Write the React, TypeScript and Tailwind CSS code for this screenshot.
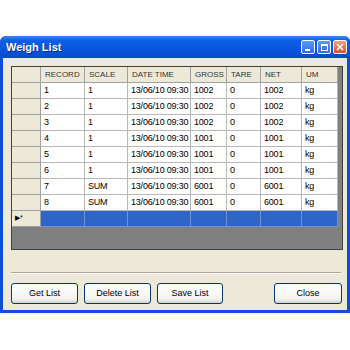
import React from "react";

type Row = { record: string; scale: string; date: string; gross: string; tare: string; net: string; um: string };

const rows: Row[] = [
  { record: "1", scale: "1", date: "13/06/10 09:30", gross: "1002", tare: "0", net: "1002", um: "kg" },
  { record: "2", scale: "1", date: "13/06/10 09:30", gross: "1002", tare: "0", net: "1002", um: "kg" },
  { record: "3", scale: "1", date: "13/06/10 09:30", gross: "1002", tare: "0", net: "1002", um: "kg" },
  { record: "4", scale: "1", date: "13/06/10 09:30", gross: "1001", tare: "0", net: "1001", um: "kg" },
  { record: "5", scale: "1", date: "13/06/10 09:30", gross: "1001", tare: "0", net: "1001", um: "kg" },
  { record: "6", scale: "1", date: "13/06/10 09:30", gross: "1001", tare: "0", net: "1001", um: "kg" },
  { record: "7", scale: "SUM", date: "13/06/10 09:30", gross: "6001", tare: "0", net: "6001", um: "kg" },
  { record: "8", scale: "SUM", date: "13/06/10 09:30", gross: "6001", tare: "0", net: "6001", um: "kg" },
];

const headers = ["RECORD", "SCALE", "DATE TIME", "GROSS", "TARE", "NET", "UM"];

const cols = "grid grid-cols-[29px_44px_43px_63px_36px_34px_41px_36px]";

function RowHead({ children }: { children?: React.ReactNode }) {
  return (
    <div className="flex h-[16px] items-center border-r border-b border-r-[#a0a0a0] border-b-[#a0a0a0] bg-[#ece9d8] pl-[3px] text-[7px] text-black">
      {children}
    </div>
  );
}

function Btn({ label, w }: { label: string; w: string }) {
  return (
    <button
      className={`${w} flex h-[21px] items-center justify-center rounded-[3px] border border-[#003c74] bg-[linear-gradient(#ffffff,#f4f3ee_80%,#d6d0c5)] text-[9px] text-black`}
    >
      {label}
    </button>
  );
}

export default function App() {
  return (
    <div className="h-[350px] w-[350px] bg-white pt-[36px] font-['Liberation_Sans',Arial,sans-serif]">
      <div className="flex h-[277px] w-[350px] flex-col rounded-t-[6px] bg-[#0a4fd6]">
        {/* title bar */}
        <div className="flex h-[22px] items-center justify-between rounded-t-[6px] bg-[linear-gradient(#3d8cf5,#0a5fe6_20%,#0853d9_70%,#0a48c4)] pl-[6px] pr-[3px]">
          <span className="text-[11px] font-bold text-white [text-shadow:1px_1px_0_#0a2a8a]">Weigh List</span>
          <div className="flex gap-[2px]">
            <div className="relative h-[14px] w-[14px] rounded-[2px] border border-white bg-[linear-gradient(#5a9cff,#2a6ee8)]">
              <div className="absolute bottom-[2px] left-[3px] h-[2px] w-[5px] bg-white" />
            </div>
            <div className="relative h-[14px] w-[14px] rounded-[2px] border border-white bg-[linear-gradient(#5a9cff,#2a6ee8)]">
              <div className="absolute left-[3px] top-[3px] h-[7px] w-[7px] border border-t-2 border-white" />
            </div>
            <div className="flex h-[14px] w-[14px] items-center justify-center rounded-[2px] border border-white bg-[linear-gradient(#f0a080,#e0502a)]">
              <svg width="8" height="8" viewBox="0 0 8 8">
                <path d="M1 1 L7 7 M7 1 L1 7" stroke="white" strokeWidth="1.6" />
              </svg>
            </div>
          </div>
        </div>

        {/* body */}
        <div className="mx-[3px] mb-[3px] flex flex-1 flex-col bg-[#ece9d8] px-[8px] pt-[8px]">
          <div className="h-[184px] w-[332px] border border-[#404040] bg-[#808080]">
            <div className={cols}>
              <div className="h-[16px] border-r border-b border-r-[#a0a0a0] border-b-[#a0a0a0] bg-[#ece9d8]" />
              {headers.map((h) => (
                <div
                  key={h}
                  className="flex h-[16px] items-center overflow-hidden whitespace-nowrap border-r border-b border-r-[#a0a0a0] border-b-[#a0a0a0] bg-[#ece9d8] pl-[4px] text-[8px] text-[#333]"
                >
                  {h}
                </div>
              ))}
              {rows.map((r) => (
                <React.Fragment key={r.record}>
                  <RowHead />
                  {[r.record, r.scale, r.date, r.gross, r.tare, r.net, r.um].map((v, i) => (
                    <div
                      key={i}
                      className="flex h-[16px] items-center overflow-hidden whitespace-nowrap border-r border-b border-[#b8b8b8] bg-white pl-[3px] text-[9px] tracking-[-0.2px] text-black"
                    >
                      {v}
                    </div>
                  ))}
                </React.Fragment>
              ))}
              <RowHead>▶*</RowHead>
              {headers.map((h) => (
                <div key={h} className="h-[16px] border-r border-b border-[#6f93d8] bg-[#2f64c8]" />
              ))}
            </div>
          </div>

          <div className="mt-[22px] h-[2px] w-[330px] border-t border-b border-t-[#aca899] border-b-white" />

          <div className="mt-[9px] flex w-[331px]">
            <div className="flex gap-[6px]">
              <Btn label="Get List" w="w-[67px]" />
              <Btn label="Delete List" w="w-[67px]" />
              <Btn label="Save List" w="w-[66px]" />
            </div>
            <div className="ml-auto">
              <Btn label="Close" w="w-[68px]" />
            </div>
          </div>
        </div>
      </div>
    </div>
  );
}
